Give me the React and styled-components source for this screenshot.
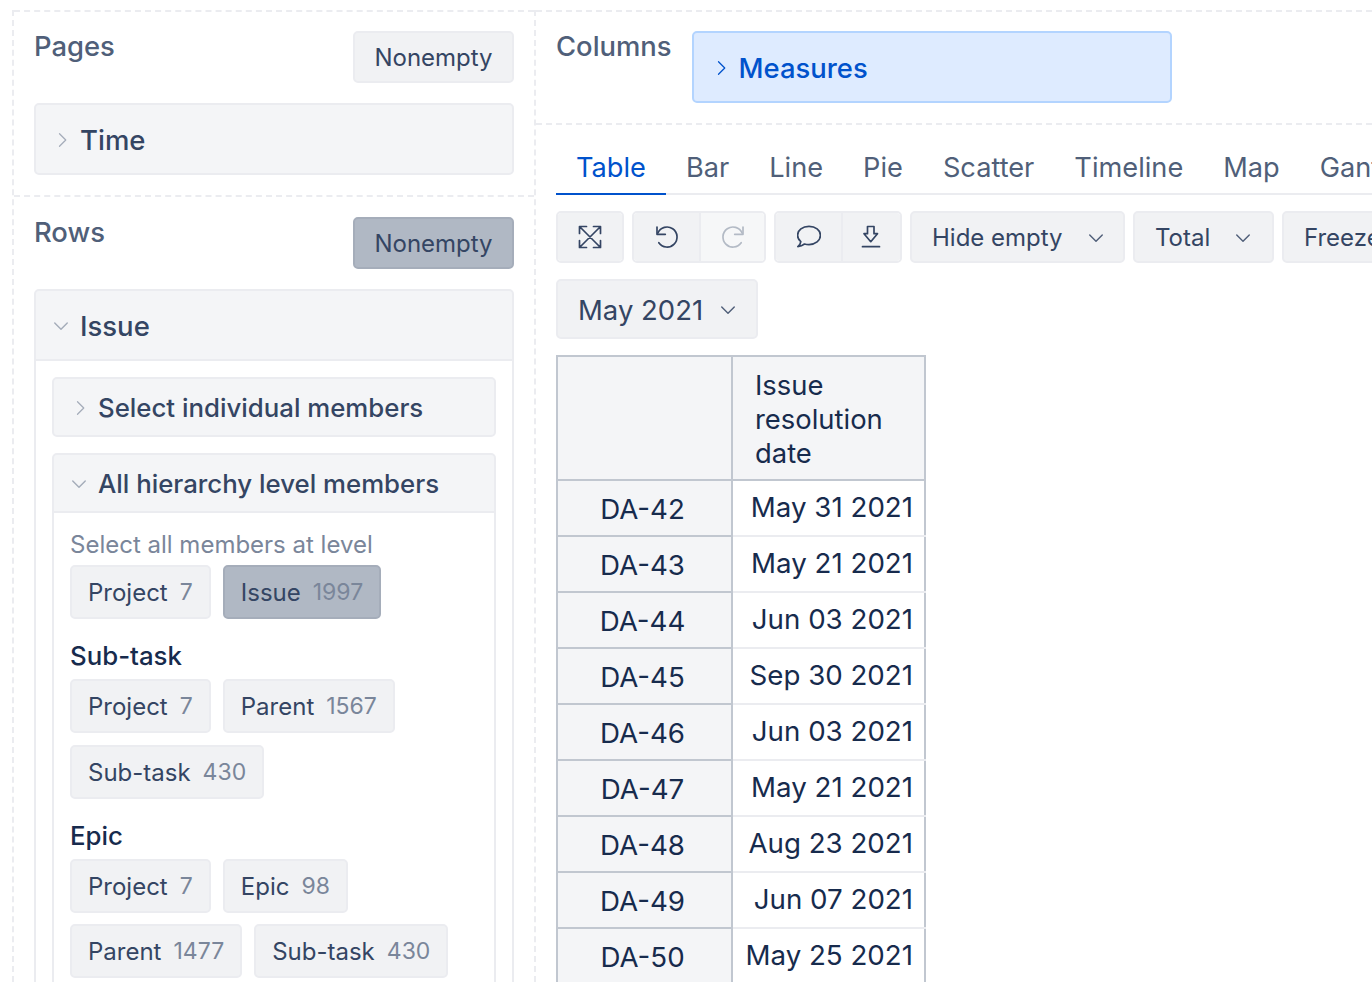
import styled, { createGlobalStyle } from "styled-components";

const GlobalStyle = createGlobalStyle`
html, body {
  margin: 0;
  height: 100%;
  overflow: hidden;
  background: #fff;
  font-family: Inter, "Noto Sans", sans-serif;
  color: #344563;
}
* { box-sizing: border-box; }
`;

const Page = styled.div`
display: flex;
height: 982px;
padding: 10px 0 0 12px;
overflow: hidden;
`;

const LeftColumn = styled.div`
flex: 0 0 524px;
border-left: 2px dashed #EBECF0;
border-right: 2px dashed #EBECF0;
`;

const RightColumn = styled.div`
flex: 1;
min-width: 0;
overflow: hidden;
`;

const Section = styled.section`
border-top: 2px dashed #EBECF0;
padding: ${(p) => p.$top}px 20px 20px 20px;
`;

const SectionHead = styled.div`
display: flex;
justify-content: space-between;
align-items: flex-start;
margin-bottom: 20px;
`;

const SectionTitle = styled.h3`
margin: 0;
font-size: 27.4px;
line-height: 30px;
font-weight: 500;
color: #505F79;
`;

const Nonempty = styled.button`
width: 161px;
height: 52px;
padding: 0;
font: 400 24px Inter, sans-serif;
color: #344563;
border-radius: 5px;
border: 2px solid ${(p) => (p.$active ? "#A5ADBA" : "#EBECF0")};
background: ${(p) => (p.$active ? "#B0B8C4" : "#F1F2F4")};
`;

const Panel = styled.div`
background: #F4F5F7;
border: 2px solid #EBECF0;
border-radius: 5px;
`;

const PanelHead = styled.div`
display: flex;
align-items: center;
height: ${(p) => p.$height}px;
padding: 1px 0 0 ${(p) => p.$pad}px;
gap: ${(p) => p.$gap}px;
font-size: ${(p) => p.$size}px;
font-weight: 500;
color: #344563;
`;

const PanelBody = styled.div`
background: #fff;
border-top: 2px solid #EBECF0;
padding: ${(p) => p.$padding};
`;

const IssueBody = styled(PanelBody)`
display: flex;
flex-direction: column;
gap: 16px;
`;

const LevelHint = styled.div`
font-size: 24px;
line-height: 30px;
color: #7A869A;
`;

const LevelTitle = styled.div`
font-size: 25.8px;
line-height: 32px;
font-weight: 500;
color: #172B4D;
margin: 21px 0 7px;
`;

const ChipRow = styled.div`
display: flex;
flex-wrap: wrap;
gap: ${(p) => p.$rowGap || 12}px 12px;
margin-top: ${(p) => p.$top || 0}px;
`;

const Chip = styled.button`
height: 54px;
padding: 0 16px;
display: flex;
align-items: center;
gap: 12px;
font: 400 24px Inter, sans-serif;
color: #344563;
border-radius: 5px;
border: 2px solid ${(p) => (p.$active ? "#A5ADBA" : "#EBECF0")};
background: ${(p) => (p.$active ? "#B0B8C4" : "#F1F2F4")};
`;

const Count = styled.span`
font-size: 23px;
color: #7A869A;
`;

const ColumnsBar = styled.div`
display: flex;
align-items: flex-start;
gap: 20px;
border-top: 2px dashed #EBECF0;
border-bottom: 2px dashed #EBECF0;
padding: 19px 0 20px 20px;
`;

const MeasuresBox = styled.div`
width: 480px;
height: 72px;
display: flex;
align-items: center;
gap: 8px;
padding: 1px 0 0 17px;
background: #DEEBFF;
border: 2px solid #B3D4FF;
border-radius: 5px;
font-size: 27.4px;
font-weight: 500;
color: #0052CC;
`;

const Workspace = styled.div`
padding: 16px 0 0 20px;
`;

const Tabs = styled.div`
display: flex;
border-bottom: 2px solid #EBECF0;
height: 54px;
white-space: nowrap;
`;

const Tab = styled.div`
padding: 10px 20px 0;
height: 54px;
font-size: 27.2px;
line-height: 34px;
color: ${(p) => (p.$active ? "#0052CC" : "#505F79")};
border-bottom: 2px solid ${(p) => (p.$active ? "#0052CC" : "transparent")};
`;

const Toolbar = styled.div`
display: flex;
gap: 8px;
margin-top: 16px;
white-space: nowrap;
`;

const ToolGroup = styled.div`
display: flex;
flex: none;
height: 52px;
border: 2px solid #EBECF0;
border-radius: 5px;
overflow: hidden;
`;

const ToolIcon = styled.div`
width: ${(p) => p.$width}px;
display: flex;
align-items: center;
justify-content: center;
background: ${(p) => (p.$off ? "#F6F7F8" : "#F1F2F4")};
color: ${(p) => (p.$off ? "#B3BAC5" : "#344563")};
& + & {
  border-left: 2px solid #EBECF0;
}
`;

const ToolSelect = styled.div`
flex: none;
height: 52px;
width: ${(p) => p.$width}px;
display: flex;
align-items: center;
padding: 1px 0 0 20px;
gap: 23px;
background: #F1F2F4;
border: 2px solid #EBECF0;
border-radius: 5px;
font-size: 24px;
color: #344563;
`;

const PageSelect = styled(ToolSelect)`
height: 60px;
margin-top: 16px;
font-size: 27.5px;
gap: 15px;
`;

const Pivot = styled.table`
margin-top: 16px;
width: 370px;
border-collapse: collapse;
table-layout: fixed;
border: 2px solid #C1C7D0;
font-size: 27.7px;
color: #172B4D;
`;

const HeadCell = styled.th`
height: 124px;
padding: 2px 20px 0 22px;
background: #F4F5F7;
border: 2px solid #C1C7D0;
font-weight: 400;
font-size: 27.4px;
line-height: 34px;
text-align: left;
`;

const RowCell = styled.th`
height: 56px;
width: 175px;
padding: 2px 4px 0 0;
background: #F4F5F7;
border: 2px solid #C1C7D0;
font-weight: 400;
text-align: center;
`;

const CornerCell = styled(RowCell)`
height: 124px;
`;

const ValueCell = styled.td`
height: 56px;
padding: 0 11px 3px 0;
border-bottom: 2px solid #EBECF0;
text-align: right;
white-space: nowrap;
`;

const Line = ({ size = 24, width = 1.7, children, ...rest }) => (
  <svg width={size} height={size} viewBox="0 0 24 24" fill="none" stroke="currentColor" strokeWidth={width} strokeLinecap="round" strokeLinejoin="round" {...rest}>
    {children}
  </svg>
);

const ChevronRight = ({ color, size = 20 }) => (
  <Line size={size} width={1.5} style={{ color }}><path d="M9 4.5 16.5 12 9 19.5" /></Line>
);

const ChevronDown = ({ color, size = 20 }) => (
  <Line size={size} width={1.7} style={{ color }}><path d="M4.5 8.5 12 16l7.5-7.5" /></Line>
);

const GREY = "#A5ADBA";

const rows = [
  ["DA-42", "May 31 2021"],
  ["DA-43", "May 21 2021"],
  ["DA-44", "Jun 03 2021"],
  ["DA-45", "Sep 30 2021"],
  ["DA-46", "Jun 03 2021"],
  ["DA-47", "May 21 2021"],
  ["DA-48", "Aug 23 2021"],
  ["DA-49", "Jun 07 2021"],
  ["DA-50", "May 25 2021"],
];

const tabs = ["Table", "Bar", "Line", "Pie", "Scatter", "Timeline", "Map", "Gantt"];

const Member = ({ name, count, active }) => (
  <Chip $active={active}>{name} <Count>{count}</Count></Chip>
);

const App = () => {
  return (
    <>
      <GlobalStyle />
      <Page>
        <LeftColumn>
          <Section $top={19}>
            <SectionHead>
              <SectionTitle>Pages</SectionTitle>
              <Nonempty>Nonempty</Nonempty>
            </SectionHead>
            <Panel>
              <PanelHead $height={68} $pad={16} $gap={8} $size={27.5}>
                <ChevronRight color={GREY} />
                Time
              </PanelHead>
            </Panel>
          </Section>
          <Section $top={20}>
            <SectionHead>
              <SectionTitle>Rows</SectionTitle>
              <Nonempty $active>Nonempty</Nonempty>
            </SectionHead>
            <Panel>
              <PanelHead $height={68} $pad={15} $gap={9} $size={27.5}>
                <ChevronDown color={GREY} />
                Issue
              </PanelHead>
              <IssueBody $padding="16px 16px 60px">
                <Panel>
                  <PanelHead $height={56} $pad={16} $gap={8} $size={25.8}>
                    <ChevronRight color={GREY} />
                    Select individual members
                  </PanelHead>
                </Panel>
                <Panel>
                  <PanelHead $height={56} $pad={15} $gap={9} $size={25.8}>
                    <ChevronDown color={GREY} />
                    All hierarchy level members
                  </PanelHead>
                  <PanelBody $padding="17px 16px 40px">
                    <LevelHint>Select all members at level</LevelHint>
                    <ChipRow $top={5}>
                      <Member name="Project" count="7" />
                      <Member name="Issue" count="1997" active />
                    </ChipRow>
                    <LevelTitle>Sub-task</LevelTitle>
                    <ChipRow>
                      <Member name="Project" count="7" />
                      <Member name="Parent" count="1567" />
                      <Member name="Sub-task" count="430" />
                    </ChipRow>
                    <LevelTitle>Epic</LevelTitle>
                    <ChipRow $rowGap={11}>
                      <Member name="Project" count="7" />
                      <Member name="Epic" count="98" />
                      <Member name="Parent" count="1477" />
                      <Member name="Sub-task" count="430" />
                    </ChipRow>
                  </PanelBody>
                </Panel>
              </IssueBody>
            </Panel>
          </Section>
        </LeftColumn>
        <RightColumn>
          <ColumnsBar>
            <SectionTitle>Columns</SectionTitle>
            <MeasuresBox>
              <ChevronRight color="#0052CC" />
              Measures
            </MeasuresBox>
          </ColumnsBar>
          <Workspace>
            <Tabs>
              {tabs.map((tab, i) => (
                <Tab key={tab} $active={i === 0}>{tab}</Tab>
              ))}
            </Tabs>
            <Toolbar>
              <ToolGroup>
                <ToolIcon $width={64}>
                  <Line>
                    <path d="M2 2l20 20M22 2 2 22M1.500 8.500v-7h7M15.500 1.500h7v7M1.500 15.500v7h7M22.500 15.500v7h-7" />
                  </Line>
                </ToolIcon>
              </ToolGroup>
              <ToolGroup>
                <ToolIcon $width={65}>
                  <Line>
                    <path d="M2.900 8A10 10 0 1 1 3.800 17.700" />
                    <path d="M2 2v7.300h8.300" />
                  </Line>
                </ToolIcon>
                <ToolIcon $width={65} $off>
                  <Line>
                    <path d="M21.100 8A10 10 0 1 0 20.200 17.700" />
                    <path d="M22 2v7.300h-8.300" />
                  </Line>
                </ToolIcon>
              </ToolGroup>
              <ToolGroup>
                <ToolIcon $width={65}>
                  <Line>
                    <path d="M12 1.300C5.600 1.300.6 5.300.6 10.300c0 2.500 1.200 4.700 3.200 6.300-.2 1.900-1.200 3.700-3 5 2.800-.3 5-1.300 6.700-2.600 1.400.4 2.900.6 4.500.6 6.400 0 11.400-4 11.400-9.300S18.400 1.300 12 1.300Z" />
                  </Line>
                </ToolIcon>
                <ToolIcon $width={59}>
                  <Line>
                    <path d="M7.500 1.500H14v7.200h3.500l-6.750 8-6.750-8h3.500Z" />
                    <path d="M2.500 21.700h17" />
                  </Line>
                </ToolIcon>
              </ToolGroup>
              <ToolSelect $width={215}>
                Hide empty
                <ChevronDown color="#505F79" />
              </ToolSelect>
              <ToolSelect $width={141}>
                Total
                <ChevronDown color="#505F79" />
              </ToolSelect>
              <ToolSelect $width={180}>Freeze header</ToolSelect>
            </Toolbar>
            <PageSelect $width={202}>
              May 2021
              <ChevronDown color="#505F79" />
            </PageSelect>
            <Pivot>
              <thead>
                <tr>
                  <CornerCell />
                  <HeadCell>Issue resolution date</HeadCell>
                </tr>
              </thead>
              <tbody>
                {rows.map(([key, date]) => (
                  <tr key={key}>
                    <RowCell>{key}</RowCell>
                    <ValueCell>{date}</ValueCell>
                  </tr>
                ))}
              </tbody>
            </Pivot>
          </Workspace>
        </RightColumn>
      </Page>
    </>
  );
};

export default App;
